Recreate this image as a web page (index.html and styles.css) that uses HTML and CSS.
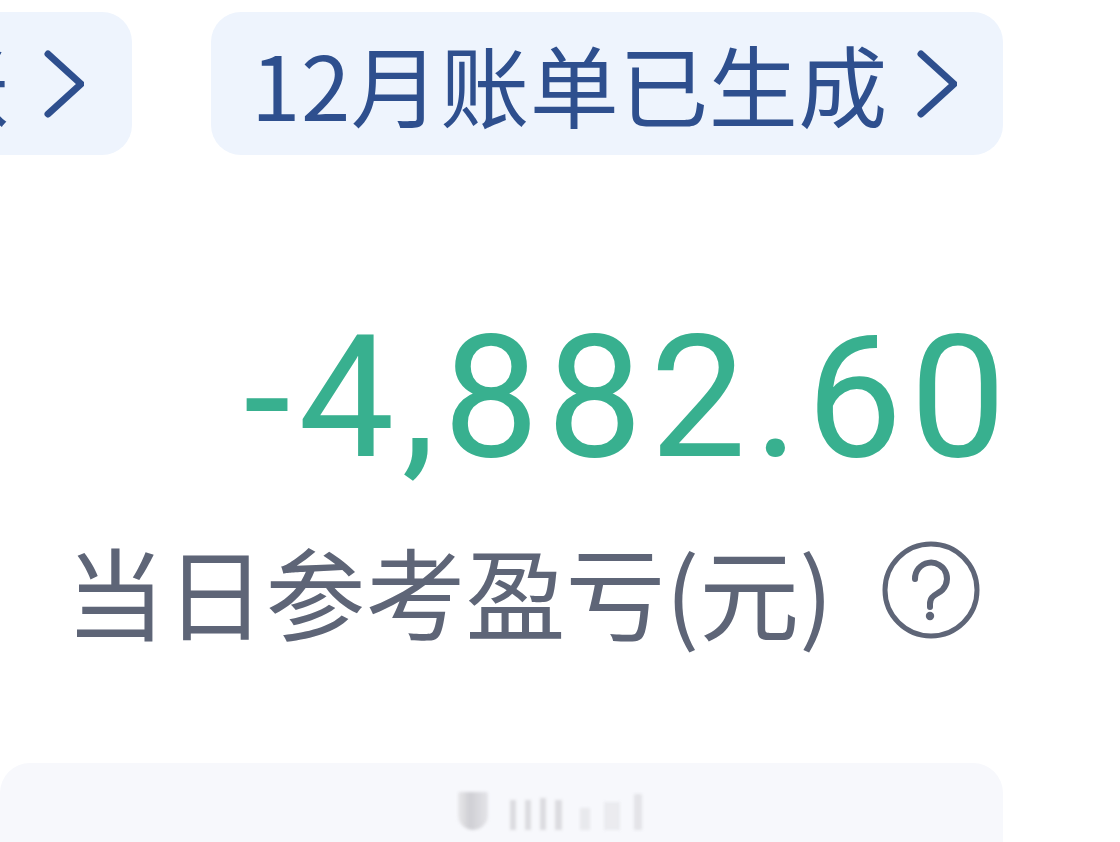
FILE: index.html
```html
<!DOCTYPE html>
<html lang="zh-CN">
<head>
<meta charset="utf-8">
<title>当日参考盈亏</title>
<link rel="stylesheet" href="styles.css">
</head>
<body>
<div class="page">
  <div class="tabs">
    <div class="pill pill-side">
      <span class="pill-text">查看账</span>
      <svg class="chev" viewBox="0 0 40 70" width="40" height="70"><polyline points="4,5 37,35 4,65" fill="none" stroke="currentColor" stroke-width="7" stroke-linecap="round" stroke-linejoin="round"/></svg>
    </div>
    <div class="pill pill-main">
      <span class="pill-text">12月账单已生成</span>
      <svg class="chev" viewBox="0 0 40 70" width="40" height="70"><polyline points="4,5 37,35 4,65" fill="none" stroke="currentColor" stroke-width="7" stroke-linecap="round" stroke-linejoin="round"/></svg>
    </div>
  </div>

  <div class="hero">
    <div class="amount">-4,882.60</div>
    <div class="label-row">
      <span class="label">当日参考盈亏(元)</span>
      <svg class="help" viewBox="0 0 100 100" width="100" height="100">
        <circle cx="50" cy="50" r="46" fill="none" stroke="currentColor" stroke-width="5"/>
        <path d="M34 39 a16 16 0 1 1 23 14 c-5 3 -8 5 -8 11 v3" fill="none" stroke="currentColor" stroke-width="6" stroke-linecap="round"/>
        <circle cx="49" cy="76" r="4.2" fill="currentColor"/>
      </svg>
    </div>
  </div>

  <div class="card">
    <div class="ghost">
      <span class="g g-u"></span>
      <span class="g g1"></span>
      <span class="g g2"></span>
      <span class="g g3"></span>
      <span class="g g4"></span>
      <span class="g g5"></span>
      <span class="g g6"></span>
      <span class="g g7"></span>
    </div>
  </div>
</div>
</body>
</html>
```

FILE: styles.css
```css
html, body {
  margin: 0;
  padding: 0;
  background: #ffffff;
  overflow: hidden;
}

.page {
  width: 1003px;
  height: 842px;
  display: flex;
  flex-direction: column;
}

.tabs {
  display: flex;
  justify-content: flex-end;
  gap: 79px;
  padding-top: 12px;
  overflow: hidden;
}

.pill {
  flex: none;
  height: 143px;
  box-sizing: border-box;
  border-radius: 30px;
  background: #eef4fd;
  color: #2e4f8e;
  display: flex;
  align-items: center;
  padding: 0 46px 0 40px;
  gap: 20px;
}

.pill-side {
  padding-right: 48px;
  gap: 34px;
}

.pill-main {
  width: 792px;
}

.pill-text {
  font-family: "Noto Sans CJK SC", "Noto Sans", sans-serif;
  font-size: 89px;
  letter-spacing: 0.5px;
  line-height: 1;
  padding-bottom: 2px;
  white-space: nowrap;
}

.chev {
  display: block;
  flex: none;
  margin-left: auto;
}

.hero {
  display: flex;
  flex-direction: column;
  align-items: flex-end;
  padding-top: 157px;
}

.amount {
  font-family: "Roboto", "Liberation Sans", sans-serif;
  font-weight: 400;
  font-size: 171px;
  line-height: 1;
  color: #38b08f;
  letter-spacing: 7.5px;
  margin-right: -10.5px;
}

.label-row {
  display: flex;
  align-items: center;
  gap: 48px;
  margin-top: 57px;
  padding-right: 22px;
  color: #5e6577;
}

.label {
  font-family: "Noto Sans CJK SC", "Noto Sans", sans-serif;
  font-size: 100px;
  line-height: 1;
  white-space: nowrap;
}

.help {
  display: block;
  flex: none;
  width: 100px;
  height: 100px;
}

.card {
  margin-top: auto;
  height: 79px;
  background: #f7f8fc;
  border-radius: 30px 30px 0 0;
  display: flex;
  align-items: flex-start;
}

.ghost {
  display: flex;
  align-items: flex-end;
  margin-left: 458px;
  margin-top: 29px;
  height: 38px;
  filter: blur(1.5px);
}

.g {
  display: block;
  background: #dcdce0;
  width: 6px;
  height: 34px;
  margin-right: 9px;
}

.g-u {
  width: 30px;
  height: 38px;
  border-radius: 2px 2px 15px 15px;
  background: linear-gradient(90deg, #e8e8ea, #cfcfd4 40%, #e4e4e8);
  margin-right: 22px;
}

.g1 { height: 30px; }
.g2 { height: 30px; }
.g3 { height: 32px; }
.g4 { height: 30px; width: 7px; margin-right: 18px; }
.g5 { height: 22px; width: 10px; margin-right: 14px; opacity: 0.55; }
.g6 { height: 28px; width: 16px; margin-right: 14px; opacity: 0.45; }
.g7 { height: 36px; width: 8px; opacity: 0.7; }
```
